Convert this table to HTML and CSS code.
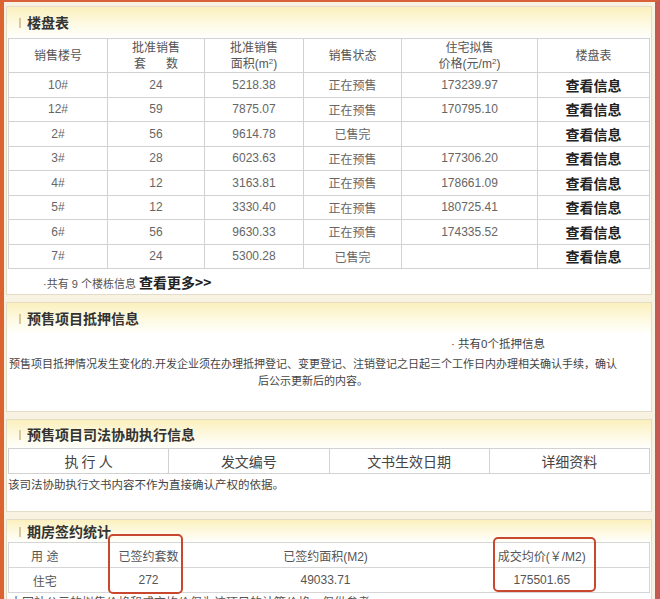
FILE: index.html
```html
<!DOCTYPE html>
<html lang="zh-CN">
<head>
<meta charset="utf-8">
<link rel="stylesheet" href="styles.css">
</head>
<body>
<div class="frame">
  <section class="panel p1">
    <div class="ph"><span class="bar"></span>楼盘表</div>
    <table class="t1">
      <colgroup><col class="c1"><col class="c2"><col class="c3"><col class="c4"><col class="c5"><col></colgroup>
      <tr class="head">
        <td>销售楼号</td>
        <td>批准销售<br>套&nbsp;&nbsp;&nbsp;&nbsp;&nbsp;&nbsp;数</td>
        <td>批准销售<br>面积(m<sup>2</sup>)</td>
        <td>销售状态</td>
        <td>住宅拟售<br>价格(元/m<sup>2</sup>)</td>
        <td>楼盘表</td>
      </tr>
      <tr><td>10#</td><td>24</td><td>5218.38</td><td>正在预售</td><td>173239.97</td><td class="lk">查看信息</td></tr>
      <tr><td>12#</td><td>59</td><td>7875.07</td><td>正在预售</td><td>170795.10</td><td class="lk">查看信息</td></tr>
      <tr><td>2#</td><td>56</td><td>9614.78</td><td>已售完</td><td></td><td class="lk">查看信息</td></tr>
      <tr><td>3#</td><td>28</td><td>6023.63</td><td>正在预售</td><td>177306.20</td><td class="lk">查看信息</td></tr>
      <tr><td>4#</td><td>12</td><td>3163.81</td><td>正在预售</td><td>178661.09</td><td class="lk">查看信息</td></tr>
      <tr><td>5#</td><td>12</td><td>3330.40</td><td>正在预售</td><td>180725.41</td><td class="lk">查看信息</td></tr>
      <tr><td>6#</td><td>56</td><td>9630.33</td><td>正在预售</td><td>174335.52</td><td class="lk">查看信息</td></tr>
      <tr><td>7#</td><td>24</td><td>5300.28</td><td>已售完</td><td></td><td class="lk">查看信息</td></tr>
    </table>
    <div class="more">·共有 9 个楼栋信息 <b>查看更多&gt;&gt;</b></div>
  </section>

  <section class="panel p2">
    <div class="ph"><span class="bar"></span>预售项目抵押信息</div>
    <div class="count">· 共有0个抵押信息</div>
    <p class="note">预售项目抵押情况发生变化的.开发企业须在办理抵押登记、变更登记、注销登记之日起三个工作日内办理相关确认手续，确认<br>后公示更新后的内容。</p>
  </section>

  <section class="panel p3">
    <div class="ph"><span class="bar"></span>预售项目司法协助执行信息</div>
    <table class="t3">
      <tr><td>执 行 人</td><td>发文编号</td><td>文书生效日期</td><td>详细资料</td></tr>
    </table>
    <p class="legal">该司法协助执行文书内容不作为直接确认产权的依据。</p>
  </section>

  <section class="panel p4">
    <div class="ph"><span class="bar"></span>期房签约统计</div>
    <table class="t4">
      <colgroup><col class="d1"><col class="d2"><col class="d3"><col></colgroup>
      <tr><td>用 途</td><td>已签约套数</td><td>已签约面积(M2)</td><td>成交均价(￥/M2)</td></tr>
      <tr><td>住宅</td><td>272</td><td>49033.71</td><td>175501.65</td></tr>
    </table>
    <p class="foot">本网站公示的拟售价格和成交均价仅为该项目的计算价格，仅供参考。</p>
    <div class="mark m1"></div>
    <div class="mark m2"></div>
  </section>
</div>
</body>
</html>
```

FILE: styles.css
```css
* { box-sizing: border-box; }
html, body { margin: 0; padding: 0; }
body {
  width: 660px;
  height: 599px;
  overflow: hidden;
  font-family: "Liberation Sans", "Noto Sans CJK SC", sans-serif;
  background: #f9f3e3;
}
.frame {
  width: 660px;
  height: 599px;
  overflow: hidden;
  border-left: 4px solid #dc6430;
  border-top: 2px solid #d9623a;
  border-right: 5px solid #c65a52;
  background: #f8f2e2;
  padding: 4px 3px 0 2px;
}
.panel {
  background: #fff;
  border: 1px solid #e4dcc6;
  margin-bottom: 7px;
  position: relative;
}
.ph {
  height: 30px;
  display: flex;
  align-items: center;
  padding-left: 12px;
  font-family: "Noto Sans CJK SC", sans-serif;
  font-size: 14px;
  font-weight: bold;
  color: #333;
  background: linear-gradient(to bottom, #fbf0bd 0%, #fdf9e2 55%, #fffffb 100%);
}
.bar {
  display: inline-block;
  width: 2px;
  height: 10px;
  background: #d8c99c;
  margin-right: 6px;
  margin-top: 2px;
}
table {
  border-collapse: collapse;
  table-layout: fixed;
  width: 642px;
  margin-left: 1px;
}
.t1 { margin-top: 1px; border: 1px solid #c9c9c9; }
.t1 td {
  border: 1px solid #d2d2d2;
  text-align: center;
  font-size: 12px;
  color: #666;
  height: 24.5px;
  padding: 0;
  font-family: "Liberation Sans", "Noto Sans CJK SC", sans-serif;
}
.t1 .c1 { width: 99px; }
.t1 .c2 { width: 97px; }
.t1 .c3 { width: 99px; }
.t1 .c4 { width: 98px; }
.t1 .c5 { width: 136px; }
.t1 .head td {
  height: 34px;
  line-height: 16px;
  color: #555;
}
sup { font-size: 8px; line-height: 0; vertical-align: 4px; }
.t1 td.lk {
  font-family: "Noto Sans CJK SC", sans-serif;
  font-size: 14px;
  font-weight: bold;
  color: #222;
}
.more {
  height: 25px;
  padding-left: 36px;
  padding-top: 3px;
  font-family: "Liberation Sans", "Noto Sans CJK SC", sans-serif;
  font-size: 11px;
  color: #555;
}
.more b { font-size: 14px; color: #222; font-family: "Noto Sans CJK SC", sans-serif; }
.count {
  padding-left: 444px;
  padding-top: 2px;
  height: 22px;
  font-family: "Liberation Sans", "Noto Sans CJK SC", sans-serif;
  font-size: 11.5px;
  color: #444;
}
.note {
  margin: 0;
  width: 612px;
  white-space: nowrap;
  text-align: center;
  font-family: "Noto Sans CJK SC", sans-serif;
  font-size: 11px;
  line-height: 17px;
  color: #444;
  padding-bottom: 22px;
}
.t3 { border: 1px solid #cfcfcf; margin-top: 0; }
.t3 td {
  border: 1px solid #d2d2d2;
  text-align: center;
  height: 25px;
  padding: 0;
  font-family: "Noto Sans CJK SC", sans-serif;
  font-size: 14px;
  color: #444;
}
.legal {
  margin: 0;
  padding: 2px 0 0 1px;
  height: 37px;
  font-family: "Noto Sans CJK SC", sans-serif;
  font-size: 11.5px;
  color: #444;
}
.p3 .ph { height: 28px; }
.p4 .ph { height: 22px; }
.t4 { border: 1px solid #d6d6d6; }
.t4 td {
  border-bottom: 1px solid #d6d6d6;
  text-align: center;
  height: 25px;
  padding: 0;
  font-family: "Liberation Sans", "Noto Sans CJK SC", sans-serif;
  font-size: 12px;
  color: #555;
}
.t4 .d1 { width: 72px; }
.t4 .d2 { width: 136px; }
.t4 .d3 { width: 218px; }
.foot {
  margin: 0;
  padding: 1px 0 0 3px;
  font-family: "Noto Sans CJK SC", sans-serif;
  font-size: 12px;
  color: #555;
  line-height: 16px;
}
.mark {
  position: absolute;
  border: 2px solid #c9472f;
  border-radius: 5px;
}
.m1 { left: 101px; top: 14px; width: 75px; height: 60px; }
.m2 { left: 486px; top: 17px; width: 103px; height: 55px; }
```
